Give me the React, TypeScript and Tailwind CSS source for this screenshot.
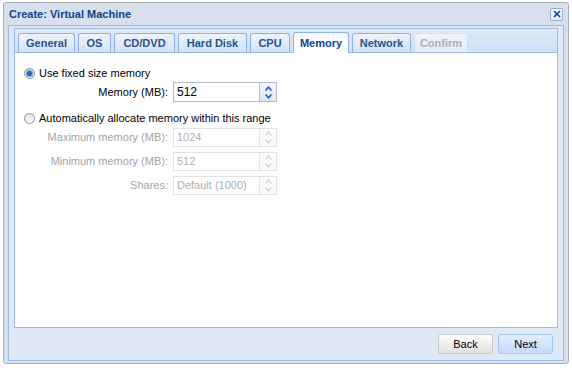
import React from 'react';

const tabs = [
  { label: 'General', w: 'w-[57px]' },
  { label: 'OS', w: 'w-[33px]' },
  { label: 'CD/DVD', w: 'w-[61px]' },
  { label: 'Hard Disk', w: 'w-[69px]' },
  { label: 'CPU', w: 'w-[40px]' },
  { label: 'Memory', w: 'w-[56px]', active: true },
  { label: 'Network', w: 'w-[59px]' },
  { label: 'Confirm', w: 'w-[54px]', disabled: true },
];

function Radio({ checked }: { checked?: boolean }) {
  return (
    <span className="flex h-[11px] w-[11px] items-center justify-center rounded-full border border-[#8f8f8f] bg-gradient-to-b from-[#e4e4e4] to-[#fafafa]">
      {checked && <span className="h-[5px] w-[5px] rounded-full bg-[#1c6bb8] shadow-[0_0_1px_1px_#5aa0e0]" />}
    </span>
  );
}

function Spinner({ disabled }: { disabled?: boolean }) {
  const c = disabled ? '#d6d6d6' : '#1e5cb3';
  return (
    <div className={`flex h-full w-[17px] flex-col items-center justify-center gap-[3px] border-l ${disabled ? 'border-[#e4e4e4] bg-[#fafafa]' : 'border-[#b5b8c8] bg-gradient-to-b from-[#f4f7fb] to-[#dfe7f2]'}`}>
      <svg width="9" height="5" viewBox="0 0 9 5">
        <path d="M1.5 4.5 L4.5 1.2 L7.5 4.5" fill="none" stroke={c} strokeWidth="1.5" />
      </svg>
      <svg width="9" height="5" viewBox="0 0 9 5">
        <path d="M1.5 0.5 L4.5 3.8 L7.5 0.5" fill="none" stroke={c} strokeWidth="1.5" />
      </svg>
    </div>
  );
}

function Field({ label, value, disabled, h }: { label: string; value: string; disabled?: boolean; h: string }) {
  return (
    <div className={`flex ${h} items-center`}>
      <span className={`w-[149px] pr-[5px] text-right ${disabled ? 'text-[#a3a3a3]' : 'text-black'}`}>{label}</span>
      <div className={`flex h-full w-[104px] items-stretch border ${disabled ? 'border-[#e2e2e2]' : 'border-[#b5b8c8]'} bg-white`}>
        <span className={`flex flex-1 items-center pl-[3px] ${disabled ? 'text-[#b0b0b0]' : 'text-black text-[12px]'}`}>{value}</span>
        <Spinner disabled={disabled} />
      </div>
    </div>
  );
}

export default function App() {
  return (
    <div className="h-[368px] w-[572px] bg-white pl-[3px] pt-[2px] text-[11px] font-['Liberation_Sans',Arial,sans-serif]">
      <div className="flex h-[362px] w-[566px] flex-col rounded-[3px] border border-[#a6acb4] bg-[#d7e0ec] px-[4px] pb-[2px]">
        <div className="flex h-[22px] shrink-0 items-center justify-between pl-[1px] pr-[1px]">
          <span className="font-bold text-[#15428b]">Create: Virtual Machine</span>
          <span className="flex h-[13px] w-[13px] items-center justify-center rounded-[2px] border border-[#8eb0dc] bg-gradient-to-b from-white to-[#dfe9f6]">
            <svg width="8" height="8" viewBox="0 0 8 8">
              <path d="M1 1 L7 7 M7 1 L1 7" stroke="#15428b" strokeWidth="1.6" />
            </svg>
          </span>
        </div>
        <div className="flex flex-1 flex-col border border-[#99bbe8] bg-[#dfe8f6] px-[5px] pt-[2px]">
          <div className="flex h-[300px] flex-col border border-[#99bbe8] bg-white">
            <div className="flex h-[24px] shrink-0 items-end gap-[3px] border-b border-[#99bbe8] bg-gradient-to-b from-[#e2eaf6] to-[#cedff5] pl-[3px]">
              {tabs.map((t) => (
                <div
                  key={t.label}
                  className={`${t.w} flex items-center justify-center rounded-t-[3px] border border-b-0 font-bold ${
                    t.active
                      ? 'mb-[-1px] h-[21px] border-[#8db2e3] bg-gradient-to-b from-[#f5f9fe] to-white text-[#15428b]'
                      : t.disabled
                        ? 'h-[19px] border-[#d3e1f1] bg-gradient-to-b from-[#eef3fa] to-[#e2ebf7] text-[#b3aeb0]'
                        : 'h-[19px] border-[#8db2e3] bg-gradient-to-b from-[#eef4fc] to-[#d2e1f4] text-[#2a5290]'
                  }`}
                >
                  {t.label}
                </div>
              ))}
            </div>
            <div className="flex flex-col pl-[9px] pt-[14px]">
              <label className="flex h-[13px] items-center gap-[4px]">
                <Radio checked />
                <span>Use fixed size memory</span>
              </label>
              <div className="mt-[2px]">
                <Field label="Memory (MB):" value="512" h="h-[20px]" />
              </div>
              <label className="mt-[10px] flex h-[13px] items-center gap-[4px]">
                <Radio />
                <span>Automatically allocate memory within this range</span>
              </label>
              <div className="mt-[3px] flex flex-col gap-[5px]">
                <Field label="Maximum memory (MB):" value="1024" disabled h="h-[19px]" />
                <Field label="Minimum memory (MB):" value="512" disabled h="h-[19px]" />
                <Field label="Shares:" value="Default (1000)" disabled h="h-[19px]" />
              </div>
            </div>
          </div>
          <div className="flex flex-1 items-center justify-end gap-[5px] pr-[5px]">
            <button className="h-[20px] w-[55px] rounded-[3px] border border-[#c9c9c9] bg-gradient-to-b from-white to-[#e0e0e0] text-[11px] text-black">
              Back
            </button>
            <button className="h-[20px] w-[55px] rounded-[3px] border border-[#a8c6ec] bg-gradient-to-b from-[#e1efff] to-[#c4dbf6] text-[11px] text-black">
              Next
            </button>
          </div>
        </div>
      </div>
    </div>
  );
}
